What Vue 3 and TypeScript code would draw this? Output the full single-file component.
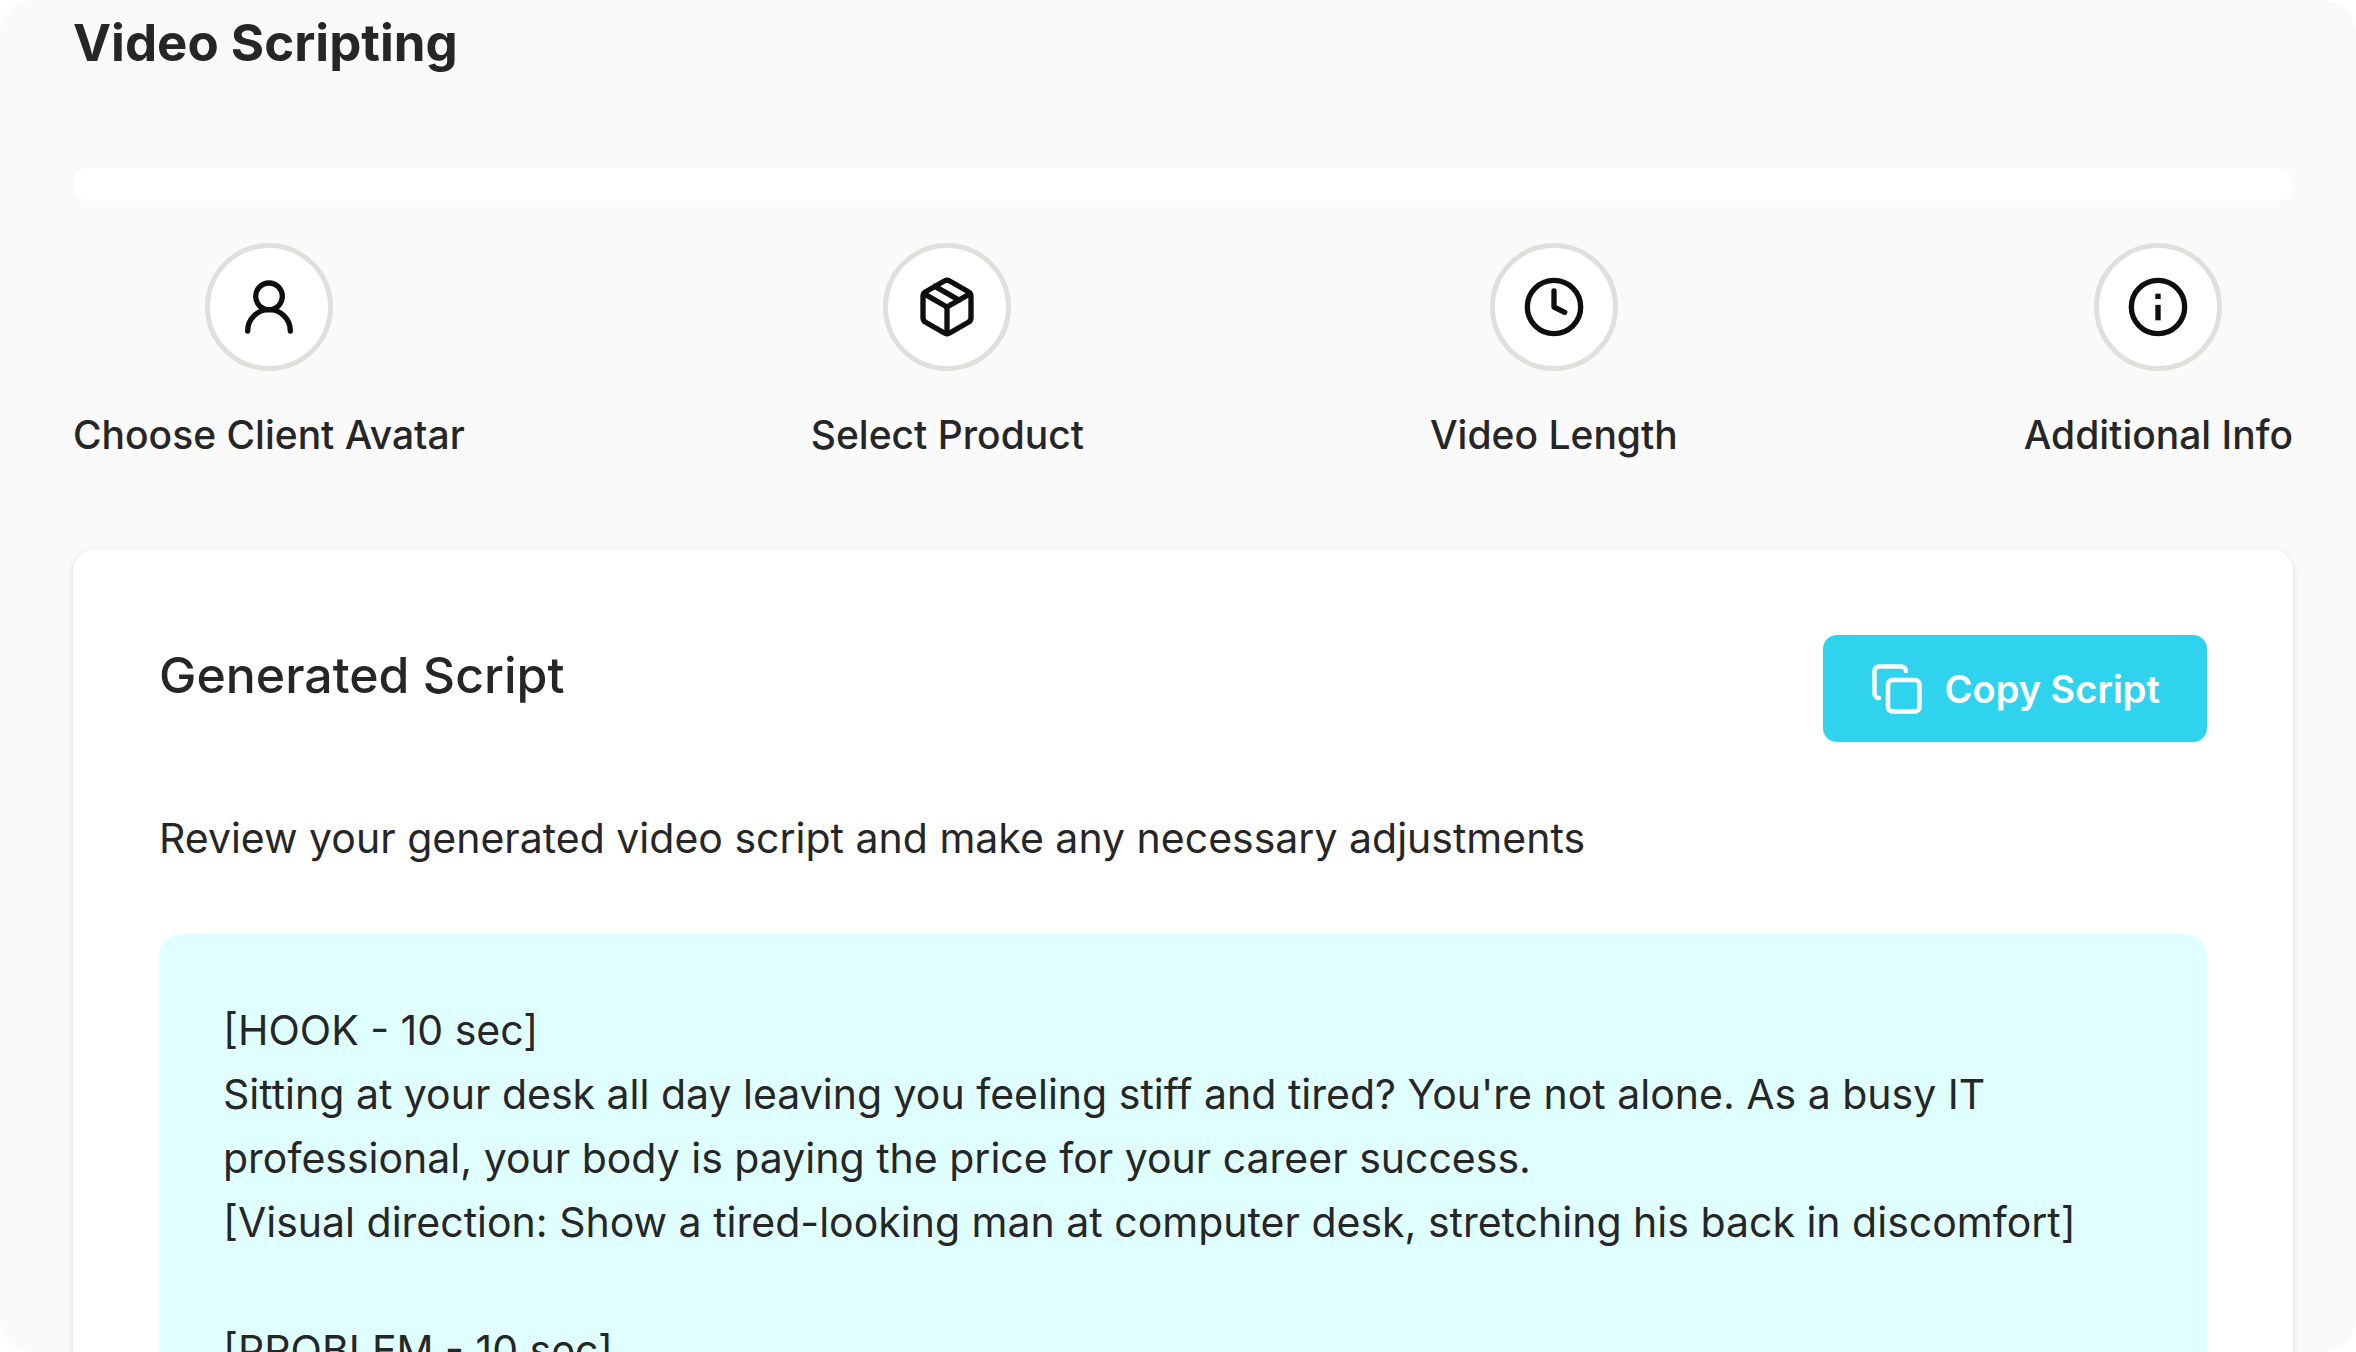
<script setup lang="ts">
interface Step {
  label: string
  icon: 'user' | 'package' | 'clock' | 'info'
}

const steps: Step[] = [
  { label: 'Choose Client Avatar', icon: 'user' },
  { label: 'Select Product', icon: 'package' },
  { label: 'Video Length', icon: 'clock' },
  { label: 'Additional Info', icon: 'info' },
]

const script = [
  '[HOOK - 10 sec]',
  "Sitting at your desk all day leaving you feeling stiff and tired? You're not alone. As a busy IT professional, your body is paying the price for your career success.",
  '[Visual direction: Show a tired-looking man at computer desk, stretching his back in discomfort]',
  '',
  '[PROBLEM - 10 sec]',
].join('\n')

function copyScript(): void {
  void navigator.clipboard?.writeText(script)
}
</script>

<template>
  <main class="page">
    <h1 class="title">Video Scripting</h1>
    <div class="progress"></div>

    <ol class="steps">
      <li v-for="step in steps" :key="step.icon" class="step">
        <span class="badge">
          <svg class="step-icon" viewBox="0 0 24 24" aria-hidden="true">
            <template v-if="step.icon === 'user'">
              <circle cx="12" cy="8" r="5" />
              <path d="M20 21a8 8 0 0 0-16 0" />
            </template>
            <template v-else-if="step.icon === 'package'">
              <path d="m7.5 4.27 9 5.15" />
              <path d="M21 8a2 2 0 0 0-1-1.73l-7-4a2 2 0 0 0-2 0l-7 4A2 2 0 0 0 3 8v8a2 2 0 0 0 1 1.73l7 4a2 2 0 0 0 2 0l7-4A2 2 0 0 0 21 16Z" />
              <path d="m3.3 7 8.7 5 8.7-5" />
              <path d="M12 22V12" />
            </template>
            <template v-else-if="step.icon === 'clock'">
              <circle cx="12" cy="12" r="10" />
              <path d="M12 6v6l4 2" />
            </template>
            <template v-else>
              <circle cx="12" cy="12" r="10" />
              <path d="M12 17v-5.8" stroke-linecap="butt" />
              <path d="M12 9V7" stroke-linecap="butt" />
            </template>
          </svg>
        </span>
        <span class="label">{{ step.label }}</span>
      </li>
    </ol>

    <section class="card">
      <header class="card-head">
        <h2 class="card-title">Generated Script</h2>
        <button class="copy" type="button" @click="copyScript">
          <svg class="copy-icon" viewBox="0 0 24 24" aria-hidden="true">
            <rect x="8" y="8" width="14" height="14" rx="2" />
            <path d="M4 16c-1.1 0-2-.9-2-2V4c0-1.1.9-2 2-2h10c1.1 0 2 .9 2 2" />
          </svg>
          <span>Copy Script</span>
        </button>
      </header>
      <p class="hint">Review your generated video script and make any necessary adjustments</p>
      <div class="script">{{ script }}</div>
    </section>
  </main>
</template>

<style>
body {
  background: #fff;
}
</style>

<style scoped>
.page {
  box-sizing: border-box;
  height: 100vh;
  overflow: hidden;
  padding: 8px 63px 0 73px;
  border-radius: 34px;
  background: #fafafa;
  color: #262626;
  font-family: Inter, "Liberation Sans", sans-serif;
}

.title {
  margin: 0;
  font-size: 51px;
  line-height: 70px;
  font-weight: 700;
}

.progress {
  height: 33px;
  margin-top: 90px;
  border-radius: 16px;
  background: #fff;
}

.steps {
  display: flex;
  justify-content: space-between;
  margin: 42px 0 0;
  padding: 0;
  list-style: none;
}

.step {
  display: flex;
  flex-direction: column;
  align-items: center;
  gap: 36px;
}

.badge {
  display: flex;
  align-items: center;
  justify-content: center;
  box-sizing: border-box;
  width: 128px;
  height: 128px;
  border: 5px solid #dfe0db;
  border-radius: 50%;
  background: #fff;
}

.step-icon,
.copy-icon {
  fill: none;
  stroke: currentColor;
  stroke-width: 2;
  stroke-linejoin: round;
}

.step-icon {
  width: 64px;
  height: 64px;
  color: #0e0e0e;
  stroke-linecap: round;
}

.label {
  font-size: 39px;
  line-height: 56px;
  font-weight: 500;
}

.card {
  margin-top: 86px;
  padding: 86px;
  border-radius: 22px;
  background: #fff;
  box-shadow: 0 2px 6px rgba(0, 0, 0, 0.14);
}

.card-head {
  display: flex;
  align-items: flex-start;
  justify-content: space-between;
}

.card-title {
  margin: 0;
  font-size: 50px;
  line-height: 80px;
  font-weight: 500;
}

.copy {
  display: flex;
  align-items: center;
  gap: 21px;
  height: 107px;
  padding: 0 47px;
  border: 0;
  border-radius: 14px;
  background: #2fd3ee;
  color: #fff;
  font-family: inherit;
  font-size: 38px;
  font-weight: 600;
}

.copy-icon {
  width: 54px;
  height: 54px;
  stroke-linecap: round;
}

.hint {
  margin: 64px 0 0;
  font-size: 41px;
  line-height: 64px;
}

.script {
  margin-top: 64px;
  padding: 64px;
  border-radius: 22px;
  background: #e0ffff;
  font-size: 41px;
  line-height: 64px;
  white-space: pre-wrap;
}
</style>
